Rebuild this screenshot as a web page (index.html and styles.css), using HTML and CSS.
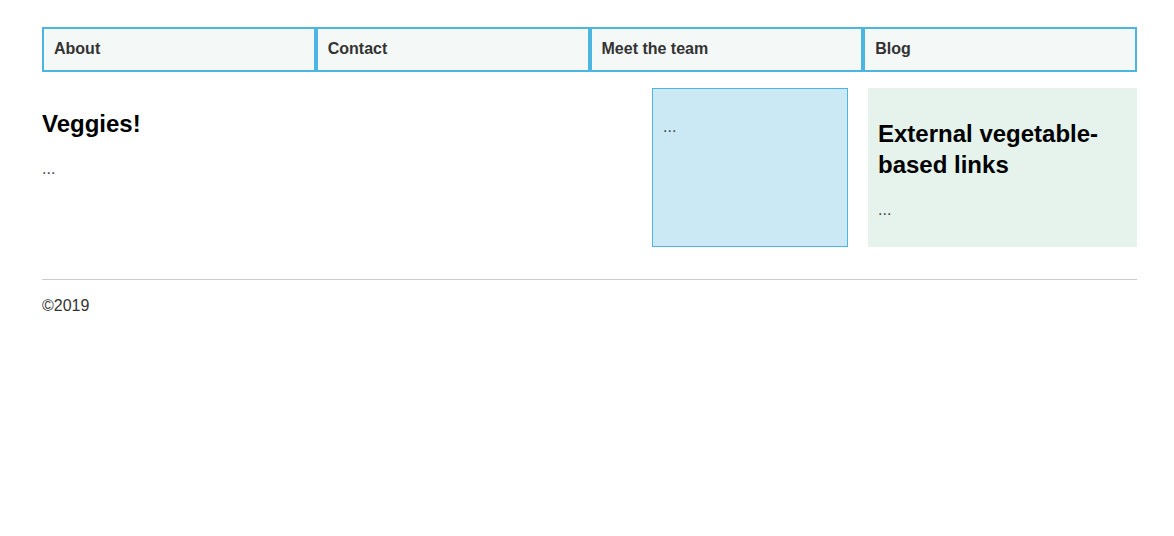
FILE: index.html
```html
<!DOCTYPE html>
<html lang="en">
<head>
<meta charset="utf-8">
<title>Veggies</title>
<link rel="stylesheet" href="styles.css">
</head>
<body>
<div class="page">
  <nav class="nav">
    <a class="nav-item" href="#">About</a>
    <a class="nav-item" href="#">Contact</a>
    <a class="nav-item" href="#">Meet the team</a>
    <a class="nav-item" href="#">Blog</a>
  </nav>
  <div class="content">
    <main class="main">
      <h2 class="title">Veggies!</h2>
      <p class="text">...</p>
    </main>
    <aside class="box-blue">
      <p class="text">...</p>
    </aside>
    <aside class="box-green">
      <h2 class="title">External vegetable-based links</h2>
      <p class="text">...</p>
    </aside>
  </div>
  <footer class="footer">
    <p class="copy">©2019</p>
  </footer>
</div>
</body>
</html>
```
FILE: styles.css
```css
html, body {
  margin: 0;
  padding: 0;
  background: #fff;
}
body {
  font-family: "Liberation Sans", Arial, sans-serif;
  font-size: 16px;
  line-height: 1.3;
  color: #333;
}
.page {
  width: 1095px;
  margin-left: 42px;
  padding-top: 27px;
}
.nav {
  display: grid;
  grid-template-columns: repeat(4, 1fr);
}
.nav-item {
  display: block;
  border: 2px solid #4cb5e1;
  background: #f4f8f7;
  padding: 10px;
  font-weight: bold;
  color: #333;
  text-decoration: none;
}
.content {
  display: grid;
  grid-template-columns: 1fr 196px 269px;
  column-gap: 20px;
  margin-top: 16px;
}
.title {
  font-size: 24px;
  line-height: 1.3;
  margin: 20px 0;
  color: #000;
}
.text {
  margin: 2px 0 0;
  color: #444;
}
.box-blue {
  background: #cbe9f5;
  border: 1px solid #4cb5e1;
  padding: 26px 10px 10px;
}
.box-green {
  background: #e5f3ec;
  padding: 10px 10px 26px;
}
.footer {
  margin-top: 32px;
  border-top: 1px solid #cccccc;
}
.copy {
  margin: 16px 0 0;
}
```
